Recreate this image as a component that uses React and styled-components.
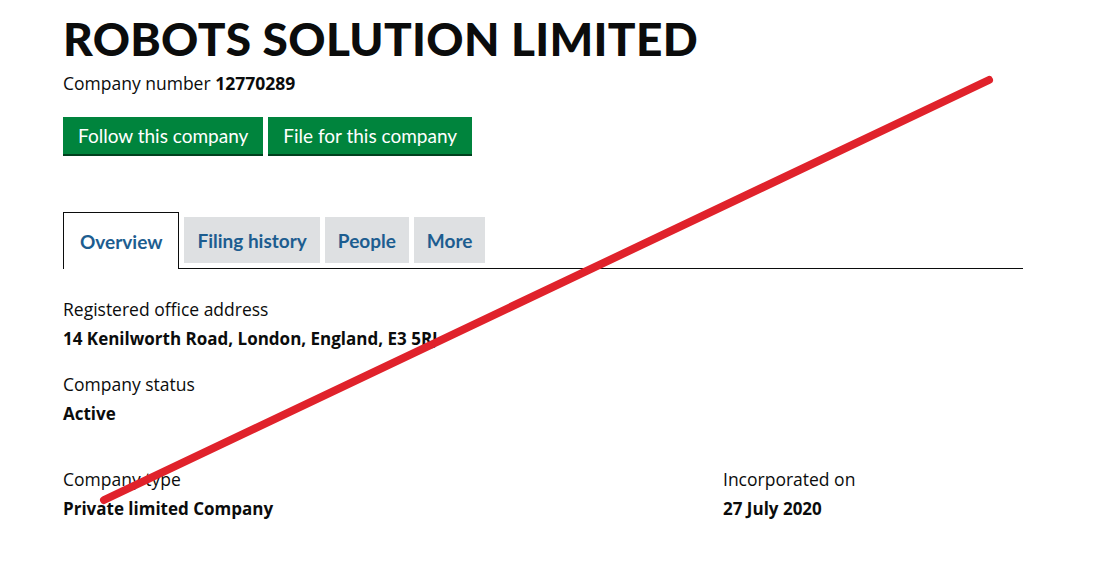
import React from "react";
import styled, { createGlobalStyle } from "styled-components";

const GlobalStyle = createGlobalStyle`
  html, body {
    margin: 0;
    padding: 0;
    background: #ffffff;
  }
  body {
    font-family: "Open Sans", "Liberation Sans", sans-serif;
    color: #0b0c0c;
  }
`;

const Page = styled.div`
  position: relative;
  width: 1103px;
  height: 564px;
  overflow: hidden;
  padding: 0 80px 0 63px;
  box-sizing: border-box;
`;

const Title = styled.h1`
  margin: 0;
  padding-top: 13px;
  font-family: "Lato", "Open Sans", sans-serif;
  font-size: 46px;
  line-height: 52px;
  font-weight: 900;
  letter-spacing: 0.3px;
`;

const CompanyNumber = styled.p`
  margin: 6px 0 0;
  font-size: 17.5px;
  line-height: 24px;

  strong {
    font-weight: 700;
  }
`;

const Actions = styled.div`
  display: flex;
  gap: 5px;
  margin-top: 22px;
`;

const GreenButton = styled.button`
  height: 39px;
  padding: 0 15px;
  border: none;
  border-bottom: 2px solid #00401e;
  background: #00843d;
  color: #ffffff;
  font-family: "Lato", sans-serif;
  font-size: 19px;
  cursor: pointer;
`;

const Tabs = styled.nav`
  display: flex;
  align-items: flex-start;
  gap: 5px;
  margin-top: 56px;
  border-bottom: 1px solid #0b0c0c;
`;

const Tab = styled.a`
  display: flex;
  align-items: center;
  box-sizing: border-box;
  height: ${(p) => (p.$active ? 57 : 46)}px;
  margin-top: ${(p) => (p.$active ? 0 : 5)}px;
  margin-bottom: ${(p) => (p.$active ? -1 : 0)}px;
  padding: 0 ${(p) => (p.$active ? 16 : 13)}px;
  background: ${(p) => (p.$active ? "#ffffff" : "#dee0e2")};
  border: ${(p) => (p.$active ? "1px solid #0b0c0c" : "none")};
  border-bottom: none;
  color: #1d5d90;
  font-family: "Lato", sans-serif;
  font-size: 19px;
  font-weight: 700;
  text-decoration: none;
`;

const Details = styled.div`
  display: grid;
  grid-template-columns: 660px 1fr;
  grid-template-rows: auto auto auto;
  margin-top: 28px;
`;

const Field = styled.div`
  grid-column: ${(p) => p.$col || 1};
  grid-row: ${(p) => p.$row};
  margin-bottom: ${(p) => p.$gap || 0}px;
`;

const Label = styled.div`
  font-size: 17.5px;
  line-height: 24px;
  font-weight: 400;
`;

const Value = styled.div`
  margin-top: 6px;
  font-size: 17px;
  line-height: 24px;
  font-weight: 700;
`;

const Strike = styled.svg`
  position: absolute;
  left: 0;
  top: 0;
  pointer-events: none;
`;

export default function App() {
  return (
    <>
      <GlobalStyle />
      <Page>
        <Title>ROBOTS SOLUTION LIMITED</Title>
        <CompanyNumber>
          Company number <strong>12770289</strong>
        </CompanyNumber>
        <Actions>
          <GreenButton>Follow this company</GreenButton>
          <GreenButton>File for this company</GreenButton>
        </Actions>
        <Tabs>
          <Tab $active>Overview</Tab>
          <Tab>Filing history</Tab>
          <Tab>People</Tab>
          <Tab>More</Tab>
        </Tabs>
        <Details>
          <Field $row={1} $gap={21}>
            <Label>Registered office address</Label>
            <Value>14 Kenilworth Road, London, England, E3 5RJ</Value>
          </Field>
          <Field $row={2} $gap={41}>
            <Label>Company status</Label>
            <Value>Active</Value>
          </Field>
          <Field $row={3}>
            <Label>Company type</Label>
            <Value>Private limited Company</Value>
          </Field>
          <Field $row={3} $col={2}>
            <Label>Incorporated on</Label>
            <Value>27 July 2020</Value>
          </Field>
        </Details>
        <Strike width="1103" height="564" viewBox="0 0 1103 564">
          <line
            x1="104"
            y1="500"
            x2="989"
            y2="80"
            stroke="#e0222b"
            strokeWidth="8"
            strokeLinecap="round"
          />
        </Strike>
      </Page>
    </>
  );
}
